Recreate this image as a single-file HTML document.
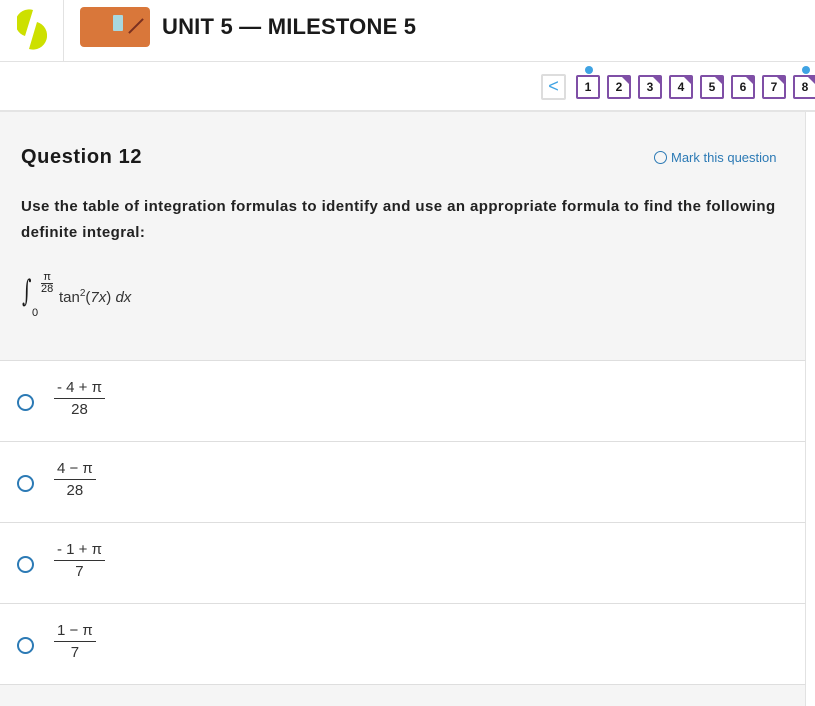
<!DOCTYPE html>
<html><head><meta charset="utf-8"><style>
*{margin:0;padding:0;box-sizing:border-box}
body{width:815px;height:706px;overflow:hidden;background:#fff;font-family:"Liberation Sans",sans-serif;color:#1a1a1a;position:relative}
.hdr{position:absolute;left:0;top:0;width:815px;height:62px;border-bottom:1px solid #e2e2e2}
.vl{position:absolute;left:63px;top:0;width:1px;height:62px;background:#e2e2e2}
.thumb{position:absolute;left:80px;top:7px;width:70px;height:40px;border-radius:4px;background:#d9773a}
.title{position:absolute;left:162px;top:14px;font-size:22px;font-weight:bold;letter-spacing:0.2px}
.nav{position:absolute;top:110px;left:0;width:815px;height:2px;background:#e4e4e4}
.box{position:absolute;top:75px;width:24px;height:24px;border:2px solid #7f4fa6;border-radius:2px;font-size:12px;font-weight:bold;text-align:center;line-height:21px;background:#fff}
.box.f:after{content:"";position:absolute;right:-1px;top:-1px;border-style:solid;border-width:0 9px 9px 0;border-color:transparent #7f4fa6 transparent transparent}
.dot{position:absolute;top:66px;width:8px;height:8px;border-radius:50%;background:#3fa3e3}
.panel{position:absolute;left:0;top:112px;width:806px;height:248px;background:#f5f5f5;border-right:1px solid #e2e2e2}
.q{position:absolute;left:21px;top:146px;font-size:20px;font-weight:bold;letter-spacing:0.6px}
.mark{position:absolute;left:654px;top:150px;font-size:13px;color:#2c7ab5}
.mark span{display:inline-block;width:13px;height:13px;border:1.5px solid #2c7ab5;border-radius:50%;vertical-align:-2px;margin-right:4px}
.txt{position:absolute;left:21px;top:194px;font-size:15px;letter-spacing:0.42px;font-weight:bold;line-height:26px;width:790px;color:#222;white-space:nowrap}
.opt{position:absolute;left:0;width:806px;height:81px;border-top:1px solid #dedede;border-right:1px solid #e2e2e2}
.rad{position:absolute;left:17px;top:33px;width:17px;height:17px;border:2px solid #2c7ab5;border-radius:50%}
.fr{position:absolute;left:54px;top:17px;text-align:center;font-size:15px;color:#333}
.fr .n{padding:0 3px;border-bottom:1px solid #333;line-height:20px}
.fr .d{line-height:22px}
.bot{position:absolute;left:0;top:684px;width:806px;height:22px;background:#f5f5f5;border-top:1px solid #dedede;border-right:1px solid #e2e2e2}
</style></head><body>
<div class="hdr"></div><div class="vl"></div>
<svg style="position:absolute;left:17px;top:8px" width="30" height="44" viewBox="0 0 30 44"><path d="M16 2 A13 13 0 0 0 8 28 Z" fill="#cde000"/><path d="M20 14 A13 13 0 0 1 12 41 Z" fill="#cde000"/></svg>
<div class="thumb"><div style="position:absolute;left:33px;top:8px;width:10px;height:16px;background:#a8d8e0;border-radius:1px"></div><div style="position:absolute;left:46px;top:18px;width:20px;height:2px;background:#7a3020;transform:rotate(-45deg)"></div></div>
<div class="title">UNIT 5 — MILESTONE 5</div>
<div style="position:absolute;left:541px;top:74px;width:25px;height:26px;border:2px solid #ddd;border-radius:2px;color:#3fa3e3;text-align:center;font-size:18px;line-height:21px">&lt;</div>
<div class="dot" style="left:585px"></div><div class="dot" style="left:802px"></div>
<div class="box" style="left:576px">1</div>
<div class="box f" style="left:607px">2</div>
<div class="box f" style="left:638px">3</div>
<div class="box f" style="left:669px">4</div>
<div class="box f" style="left:700px">5</div>
<div class="box f" style="left:731px">6</div>
<div class="box f" style="left:762px">7</div>
<div class="box f" style="left:793px">8</div>
<div class="nav"></div>
<div class="panel"></div>
<div class="q">Question 12</div>
<div class="mark"><span></span>Mark this question</div>
<div class="txt">Use the table of integration formulas to identify and use an appropriate formula to find the following<br>definite integral:</div>
<div style="position:absolute;left:22px;top:274px;font-size:30px;font-family:'DejaVu Serif',serif;font-style:italic;transform:scaleX(0.6);transform-origin:left">∫</div>
<div style="position:absolute;left:32px;top:307px;font-size:11px">0</div>
<div style="position:absolute;left:41px;top:272px;font-size:11px;text-align:center;line-height:11px"><div style="border-bottom:1px solid #333">π</div><div>28</div></div>
<div style="position:absolute;left:59px;top:288px;font-size:15px;color:#333">tan<sup style="font-size:10px">2</sup>(<i>7x</i>) <i>dx</i></div>
<div class="opt" style="top:360px"><div class="rad"></div><div class="fr"><div class="n">- 4 + π</div><div class="d">28</div></div></div>
<div class="opt" style="top:441px"><div class="rad"></div><div class="fr"><div class="n">4 − π</div><div class="d">28</div></div></div>
<div class="opt" style="top:522px"><div class="rad"></div><div class="fr"><div class="n">- 1 + π</div><div class="d">7</div></div></div>
<div class="opt" style="top:603px"><div class="rad"></div><div class="fr"><div class="n">1 − π</div><div class="d">7</div></div></div>
<div class="bot"></div>
</body></html>
